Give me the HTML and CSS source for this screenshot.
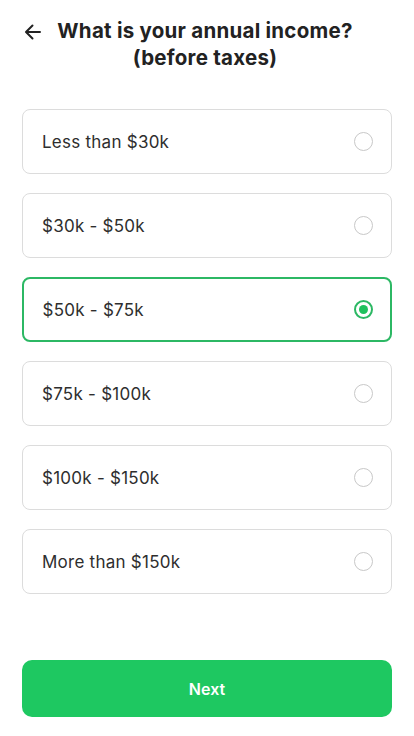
FILE: index.html
```html
<!DOCTYPE html>
<html>
<head>
<meta charset="utf-8">
<link rel="stylesheet" href="styles.css">
</head>
<body>
<div class="page">
  <header class="header">
    <svg class="back" width="20" height="20" viewBox="0 0 20 20"><path d="M17 10H3.5M9.5 3.5L3 10l6.5 6.5" fill="none" stroke="#222" stroke-width="2" stroke-linecap="round" stroke-linejoin="round"/></svg>
    <h1 class="title">What is your annual income?<br>(before taxes)</h1>
  </header>
  <div class="options">
    <div class="option"><span>Less than $30k</span><span class="radio"></span></div>
    <div class="option"><span>$30k - $50k</span><span class="radio"></span></div>
    <div class="option selected"><span>$50k - $75k</span><span class="radio"></span></div>
    <div class="option"><span>$75k - $100k</span><span class="radio"></span></div>
    <div class="option"><span>$100k - $150k</span><span class="radio"></span></div>
    <div class="option"><span>More than $150k</span><span class="radio"></span></div>
  </div>
  <button class="next">Next</button>
</div>
</body>
</html>
```
FILE: styles.css
```css
* { box-sizing: border-box; }
html, body { margin: 0; padding: 0; background: #fff; }
body { font-family: Inter, "Noto Sans", sans-serif; color: #2b2b2b; }
.page { padding: 17px 22px 0 22px; display: flex; flex-direction: column; }
.header { position: relative; height: 92px; }
.back { position: absolute; left: 1px; top: 5px; }
.title { margin: 0; padding-right: 4px; text-align: center; font-size: 20.5px; font-weight: 700; line-height: 27px; color: #222; letter-spacing: 0.25px; }
.options { display: flex; flex-direction: column; gap: 19px; }
.option { height: 65px; border: 1.5px solid #dcdcdc; border-radius: 8px; display: flex; align-items: center; justify-content: space-between; padding: 0 18px 0 19px; font-size: 17px; letter-spacing: 0.25px; color: #2e2e2e; }
.radio { width: 19px; height: 19px; border: 1.2px solid #c8c8c8; border-radius: 50%; display: flex; align-items: center; justify-content: center; }
.selected { border: 2px solid #2cb864; padding: 0 17.5px 0 18.5px; }
.selected .radio { border: 2px solid #2cb864; }
.selected .radio::after { content: ""; width: 9px; height: 9px; border-radius: 50%; background: #1fc15d; }
.next { margin-top: 66px; height: 57px; border: none; border-radius: 10px; background: #1ec861; color: #fff; font-family: Inter, sans-serif; font-size: 16px; font-weight: 600; }
```
